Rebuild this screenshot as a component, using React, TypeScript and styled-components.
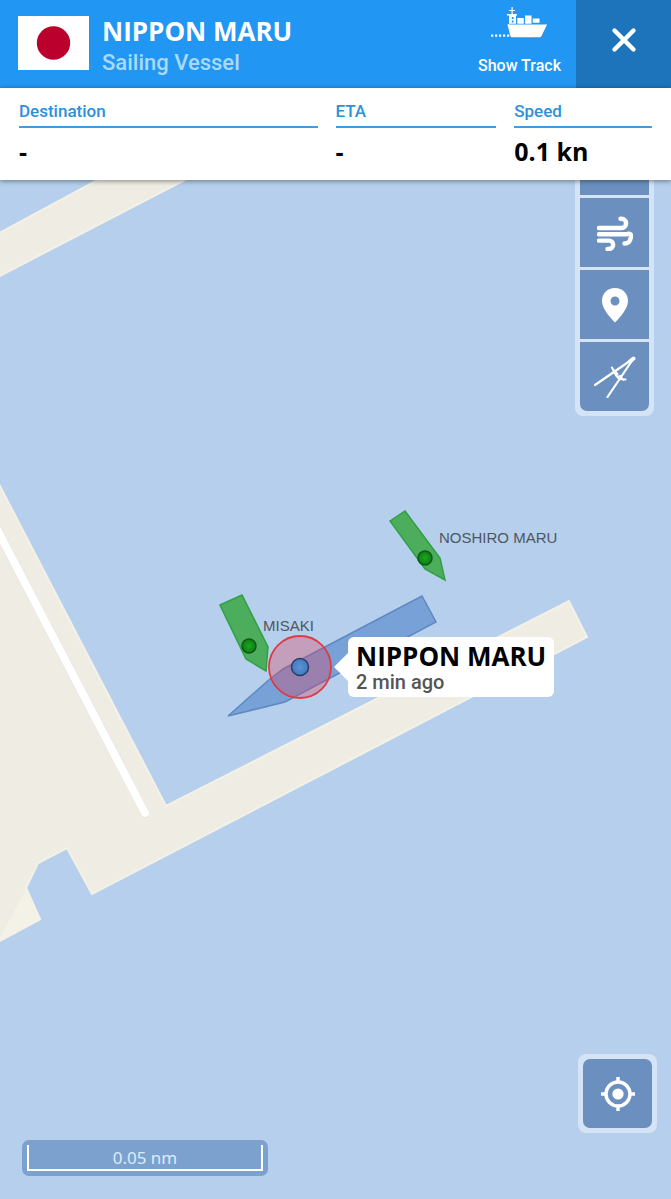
import React from "react";
import styled, { createGlobalStyle } from "styled-components";

const GlobalStyle = createGlobalStyle`
  *, *::before, *::after { box-sizing: border-box; }
  body { margin: 0; background: #b5cfec; font-family: Roboto, "Liberation Sans", sans-serif; }
  h1, h2, p, dl, dt, dd { margin: 0; }
  button { border: 0; padding: 0; cursor: pointer; font: inherit; color: inherit; }
  svg { display: block; }
`;

const Page = styled.div`
  min-height: 100vh;
  display: flex;
  flex-direction: column;
`;

const Header = styled.header`
  display: flex;
  height: 88px;
  background: #2196f3;
  color: #fff;
`;

const Flag = styled.svg`
  flex: none;
  width: 71px;
  height: 54px;
  margin: 16px 13px 0 18px;
`;

const Titles = styled.div`
  flex: 1;
  min-width: 0;
  padding-top: 14px;
`;

const VesselName = styled.h1`
  font: 700 26px/34px "Open Sans", "Noto Sans", sans-serif;
`;

const VesselType = styled.p`
  font-size: 22px;
  font-weight: 500;
  line-height: 30px;
  color: #a9dafc;
`;

const TrackButton = styled.button`
  display: flex;
  flex-direction: column;
  align-items: center;
  justify-content: space-between;
  padding: 7px 15px 11px;
  background: none;
  font-size: 16px;
  font-weight: 500;
  line-height: 22px;
`;

const CloseButton = styled.button`
  display: flex;
  align-items: center;
  justify-content: center;
  width: 95px;
  padding-bottom: 8px;
  background: #1d74ba;
`;

const Details = styled.dl`
  position: relative;
  z-index: 1;
  display: grid;
  grid-template-columns: 13fr 7fr 6fr;
  gap: 18px;
  height: 92px;
  padding: 12px 19px 0;
  background: #fff;
  box-shadow: 0 1px 5px rgba(0, 0, 0, 0.45);
`;

const DetailLabel = styled.dt`
  height: 28px;
  border-bottom: 2px solid #4799d8;
  color: #2d90dc;
  font-size: 17px;
  font-weight: 500;
  line-height: 22px;
`;

const DetailValue = styled.dd`
  padding-top: 6px;
  color: #000;
  font: 700 25px/34px "Open Sans", "Noto Sans", sans-serif;
`;

const MapArea = styled.main`
  position: relative;
  flex: 1;
  min-height: 560px;
  overflow: hidden;
  background: #b5cfec;
`;

const Chart = styled.svg`
  position: absolute;
  inset: 0;
  width: 100%;
  height: 100%;
`;

const VesselLabel = styled.span<{ $x: number; $y: number }>`
  position: absolute;
  left: ${(p) => p.$x}px;
  top: ${(p) => p.$y}px;
  color: #50565f;
  font: 15px/20px "Liberation Sans", sans-serif;
  white-space: nowrap;
`;

const Callout = styled.div`
  position: absolute;
  left: 348px;
  top: 457px;
  padding: 3px 8px;
  border-radius: 6px;
  background: #fff;
  white-space: nowrap;

  &::before {
    content: "";
    position: absolute;
    left: -14px;
    top: 16px;
    border: solid transparent;
    border-width: 14px 14px 14px 0;
    border-right-color: #fff;
  }
`;

const CalloutName = styled.h2`
  color: #000;
  font: 700 26px/32px "Open Sans", "Noto Sans", sans-serif;
`;

const CalloutAge = styled.p`
  padding-bottom: 2px;
  color: #555;
  font-size: 20px;
  font-weight: 500;
  line-height: 20px;
`;

const ToolPanel = styled.div<{ $right: number; $top?: number; $bottom?: number }>`
  position: absolute;
  right: ${(p) => p.$right}px;
  ${(p) => (p.$top !== undefined ? `top: ${p.$top}px;` : "")}
  ${(p) => (p.$bottom !== undefined ? `bottom: ${p.$bottom}px;` : "")}
  display: flex;
  flex-direction: column;
  gap: 3px;
  padding: 5px;
  border-radius: 8px;
  background: #d4e3f5;
`;

const ToolButton = styled.button`
  display: grid;
  place-items: center;
  width: 69px;
  height: 69px;
  background: #6b90bf;
  color: #fff;

  &:first-child { border-top-left-radius: 7px; border-top-right-radius: 7px; }
  &:last-child { border-bottom-left-radius: 7px; border-bottom-right-radius: 7px; }
`;

const ScaleBar = styled.div`
  position: absolute;
  left: 22px;
  bottom: 23px;
  width: 246px;
  padding: 5px;
  border-radius: 7px;
  background: #7ca1cf;
`;

const ScaleRule = styled.div`
  height: 26px;
  border: 2px solid #fff;
  border-top: 0;
  color: #dcebfb;
  font: 17px/26px "Noto Sans", "Open Sans", sans-serif;
  text-align: center;
`;

const ShipIcon = () => (
  <svg width="56" height="31" viewBox="0 0 56 31" fill="currentColor" aria-hidden="true">
    <path d="M20.500 0h1.200v3h2.300v1h-2.300v3H26v1.600h-1V17h30q1 0 .7 1.200L50.500 29q-.5 1.200-2 1.200H21q-1.200 0-1.600-1.200l-2.900-11.200q0-.8 1-.8h.5V8.600h-2V7h4.500V4h-2.300V3h2.300z" />
    <path d="M26.300 11h6.500v7h-6.500zM34 8.500h6.500V18H34zM41.700 11.500h6.800v4.300h-6.800z" />
    <path d="M20.800 10h1.800v2h-1.800zM20.800 13.500h1.800v2h-1.800zM18 16.800h37v.8H18z" fill="#2196f3" />
    <path d="M0 27.500h2.200v2.200H0zM4 27.500h2.200v2.200H4zM8 27.500h2.200v2.200H8zM12 27.500h2.200v2.200H12zM16 27.500h2.200v2.200H16z" />
  </svg>
);

const CloseIcon = () => (
  <svg width="26" height="26" viewBox="0 0 26 26" aria-hidden="true">
    <path d="M3.500 3.500l19 19M22.500 3.500l-19 19" stroke="#fff" strokeWidth="4.400" strokeLinecap="round" />
  </svg>
);

const WindIcon = () => (
  <svg width="36" height="36" viewBox="0 0 36 36" fill="none" stroke="currentColor" strokeWidth="4.400" strokeLinecap="round" aria-hidden="true">
    <path d="M2 13h22.500a4.600 4.600 0 0 0 0-9.200H23.500" />
    <path d="M2 19.300H30a1 1 0 0 1 3.500 4c0 3-2.500 5.200-6 5.200" />
    <path d="M2 25.600h10a4.200 4.200 0 0 1 0 8.400H10.500" />
  </svg>
);

const PinIcon = () => (
  <svg width="28" height="36" viewBox="0 0 28 36" aria-hidden="true">
    <path fill="currentColor" fillRule="evenodd" d="M14 1C6.500 1 1 6.500 1 13.700 1 22 9 30 14 35.500 19 30 27 22 27 13.700 27 6.500 21.500 1 14 1zm0 8.500a4.500 4.500 0 1 1 0 9 4.500 4.500 0 0 1 0-9z" />
  </svg>
);

const DividersIcon = () => (
  <svg width="42" height="42" viewBox="0 0 42 42" fill="none" stroke="currentColor" strokeLinecap="round" strokeLinejoin="round" aria-hidden="true">
    <path d="M1 29L39.500 2.500 13.500 41" strokeWidth="2.200" />
    <path d="M36 5.500l3.500-3" strokeWidth="4" />
    <path d="M18 11.500l3.500 7 3.500 4.500 6.500.5M19.500 14l4 4M27 21.500l2.500 2.500M22.500 17.500v3M24 20.500l3-.5" strokeWidth="2" />
  </svg>
);

const LocateIcon = () => (
  <svg width="36" height="36" viewBox="0 0 36 36" fill="none" stroke="currentColor" strokeWidth="3.400" aria-hidden="true">
    <circle cx="18" cy="18" r="12" />
    <circle cx="18" cy="18" r="5.600" fill="currentColor" stroke="none" />
    <path d="M18 1v5M18 30v5M1 18h5M30 18h5" />
  </svg>
);

const HarbourChart = () => (
  <Chart aria-hidden="true">
    <defs>
      <radialGradient id="greenDot">
        <stop offset="0" stopColor="#1da51f" />
        <stop offset="1" stopColor="#0a7f12" />
      </radialGradient>
      <radialGradient id="blueDot">
        <stop offset="0" stopColor="#5b94d8" />
        <stop offset="1" stopColor="#4579bd" />
      </radialGradient>
    </defs>
    <g transform="translate(0 -180)">
      <g fill="#eeece3" stroke="#f4f1e6" strokeWidth="2">
        <path d="M-10 238L118 169H206L-10 281Z" />
        <path d="M-10 467L166 806 569 601 587 637 92 894 67 848 38 863 26 888 40 919-10 944Z" />
      </g>
      <path d="M27 888L41 920 0 942V937Z" fill="#f4f1e6" />
      <path d="M-10 516L145 813" stroke="#e6e4dd" strokeWidth="9" strokeLinecap="round" />
      <path d="M-10 516L145 813" stroke="#fff" strokeWidth="8" strokeLinecap="round" />
      <path d="M422 596L436 622 285 702 228 716 270 679 283 669Z" fill="#78a1d8" stroke="#5f88c2" strokeWidth="1.500" />
      <g fill="#4cae5d" stroke="#2fa144" strokeWidth="1.500">
        <path d="M390 521L405 511 440 558 445 580 425 569Z" />
        <path d="M220 605L242 595 268 647 266 671 246 659Z" />
      </g>
      <g fill="url(#greenDot)" stroke="#12561c" strokeWidth="1.500">
        <circle cx="425" cy="558" r="7" />
        <circle cx="249" cy="646" r="7" />
      </g>
      <circle cx="300" cy="667" r="31" fill="rgba(225,60,90,.33)" stroke="#df3b45" strokeWidth="1.800" />
      <circle cx="300" cy="667" r="8.500" fill="url(#blueDot)" stroke="#263f68" strokeWidth="1.500" />
    </g>
  </Chart>
);

const details = [
  { label: "Destination", value: "-" },
  { label: "ETA", value: "-" },
  { label: "Speed", value: "0.1 kn" },
];

export default function App() {
  return (
    <Page>
      <GlobalStyle />
      <Header>
        <Flag viewBox="0 0 71 54" role="img" aria-label="Japan">
          <rect width="71" height="54" fill="#fff" />
          <circle cx="35.500" cy="27" r="16.700" fill="#bc002d" />
        </Flag>
        <Titles>
          <VesselName>NIPPON MARU</VesselName>
          <VesselType>Sailing Vessel</VesselType>
        </Titles>
        <TrackButton type="button">
          <ShipIcon />
          <span>Show Track</span>
        </TrackButton>
        <CloseButton type="button" aria-label="Close">
          <CloseIcon />
        </CloseButton>
      </Header>
      <Details>
        {details.map((d) => (
          <div key={d.label}>
            <DetailLabel>{d.label}</DetailLabel>
            <DetailValue>{d.value}</DetailValue>
          </div>
        ))}
      </Details>
      <MapArea>
        <HarbourChart />
        <VesselLabel $x={439} $y={348}>NOSHIRO MARU</VesselLabel>
        <VesselLabel $x={263} $y={436}>MISAKI</VesselLabel>
        <Callout>
          <CalloutName>NIPPON MARU</CalloutName>
          <CalloutAge>2 min ago</CalloutAge>
        </Callout>
        <ToolPanel $right={17} $top={-59}>
          <ToolButton type="button" aria-label="Layers" />
          <ToolButton type="button" aria-label="Wind"><WindIcon /></ToolButton>
          <ToolButton type="button" aria-label="Places"><PinIcon /></ToolButton>
          <ToolButton type="button" aria-label="Measure distance"><DividersIcon /></ToolButton>
        </ToolPanel>
        <ToolPanel $right={14} $bottom={66}>
          <ToolButton type="button" aria-label="My location"><LocateIcon /></ToolButton>
        </ToolPanel>
        <ScaleBar>
          <ScaleRule>0.05 nm</ScaleRule>
        </ScaleBar>
      </MapArea>
    </Page>
  );
}
